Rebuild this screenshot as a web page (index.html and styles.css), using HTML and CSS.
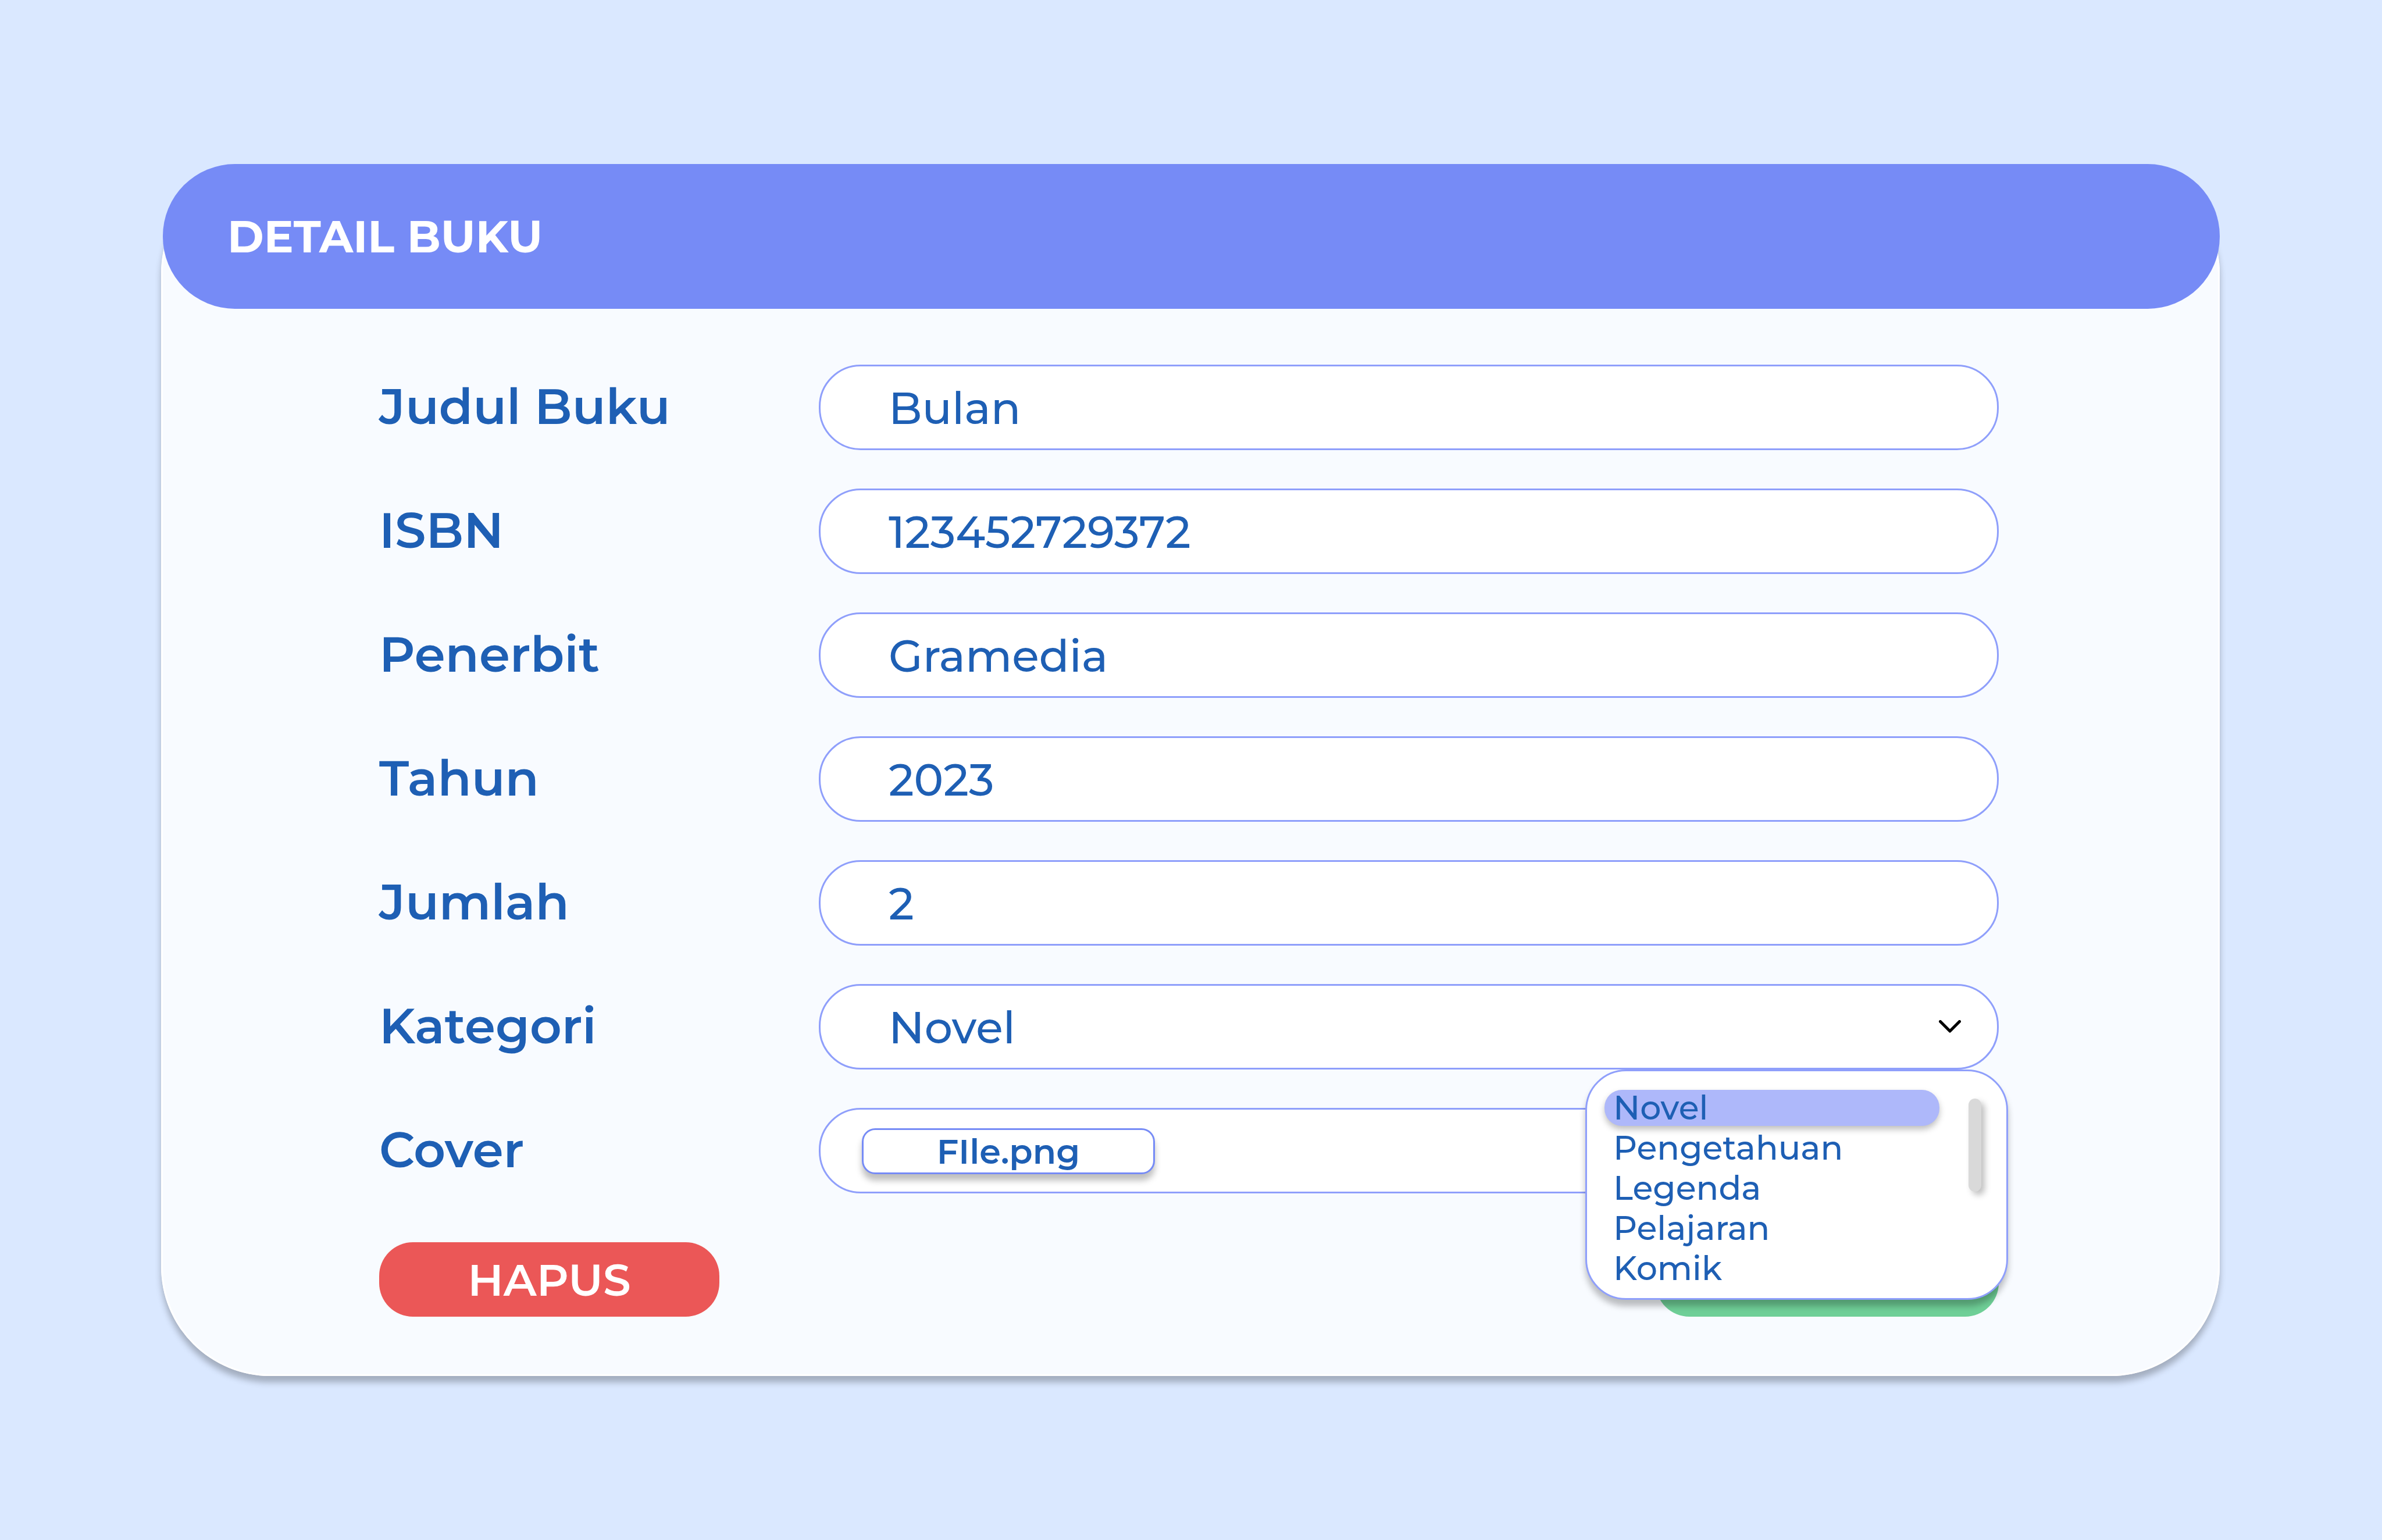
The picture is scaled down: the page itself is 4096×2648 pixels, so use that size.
FILE: index.html
```html
<!DOCTYPE html>
<html lang="id">
<head>
  <meta charset="utf-8">
  <meta name="viewport" content="width=device-width, initial-scale=1">
  <title>Detail Buku</title>
  <link rel="stylesheet" href="styles.css">
</head>
<body>
  <main class="card">
    <header class="card-header">
      <h1 class="card-title">DETAIL BUKU</h1>
    </header>
    <form class="form">
      <div class="row">
        <label class="label" for="judul">Judul Buku</label>
        <input class="field" id="judul" type="text" value="Bulan">
      </div>
      <div class="row">
        <label class="label" for="isbn">ISBN</label>
        <input class="field" id="isbn" type="text" value="123452729372">
      </div>
      <div class="row">
        <label class="label" for="penerbit">Penerbit</label>
        <input class="field" id="penerbit" type="text" value="Gramedia">
      </div>
      <div class="row">
        <label class="label" for="tahun">Tahun</label>
        <input class="field" id="tahun" type="text" value="2023">
      </div>
      <div class="row">
        <label class="label" for="jumlah">Jumlah</label>
        <input class="field" id="jumlah" type="text" value="2">
      </div>
      <div class="row">
        <label class="label" for="kategori">Kategori</label>
        <div class="select">
          <select class="field" id="kategori">
            <option selected>Novel</option>
            <option>Pengetahuan</option>
            <option>Legenda</option>
            <option>Pelajaran</option>
            <option>Komik</option>
          </select>
          <svg class="chevron" viewBox="0 0 38 22" aria-hidden="true"><path d="M2.500 2.500 19 19 35.500 2.500"/></svg>
          <div class="menu">
            <ul class="options" role="listbox" aria-label="Kategori">
              <li class="option option-active" role="option" aria-selected="true">Novel</li>
              <li class="option" role="option">Pengetahuan</li>
              <li class="option" role="option">Legenda</li>
              <li class="option" role="option">Pelajaran</li>
              <li class="option" role="option">Komik</li>
            </ul>
            <div class="scroll-thumb"></div>
          </div>
        </div>
      </div>
      <div class="row">
        <label class="label" for="cover">Cover</label>
        <div class="field file-field">
          <button class="file-button" id="cover" type="button">FIle.png</button>
        </div>
      </div>
      <div class="actions">
        <button class="button button-delete" type="button">HAPUS</button>
        <button class="button button-save" type="submit" aria-label="Simpan"></button>
      </div>
    </form>
  </main>
</body>
</html>
```
FILE: styles.css
```css
:root {
  --page: #dae8ff;
  --card: #f8fbff;
  --primary: #768bf6;
  --outline: #8f9ffb;
  --ink: #1e5fb4;
  --shadow: 0 11px 11px rgba(0, 0, 0, 0.25);
}

* {
  box-sizing: border-box;
}

body {
  margin: 0;
  padding: 282px 279px 282px 277px;
  background: var(--page);
  color: var(--ink);
  font-family: Montserrat, Inter, "Open Sans", sans-serif;
}

button,
input,
select {
  margin: 0;
  color: inherit;
  font: inherit;
}

.card {
  border-radius: 188px;
  background: var(--card);
  box-shadow: inset 0 0 0 3px #fff, var(--shadow);
}

.card-header {
  display: flex;
  align-items: center;
  height: 249px;
  margin-left: 3px;
  padding: 0 111px;
  border-radius: 124px;
  background: var(--primary);
}

.card-title {
  margin: 0;
  color: #fff;
  font-size: 76px;
  font-weight: 700;
}

.form {
  display: flex;
  flex-direction: column;
  gap: 66px;
  padding: 96px 380px 102px 375px;
}

.row {
  display: grid;
  grid-template-columns: 756px 1fr;
  align-items: center;
}

.label {
  padding-bottom: 4px;
  font-size: 85px;
  font-weight: 600;
  line-height: 104px;
}

.field {
  display: block;
  width: 100%;
  height: 147px;
  padding: 2px 120px 0 117px;
  border: 3px solid var(--outline);
  border-radius: 72px;
  background: #fff;
  font-size: 76px;
  font-weight: 500;
}

.select {
  position: relative;
}

.select .field {
  appearance: none;
}

.chevron {
  position: absolute;
  top: 62px;
  right: 65px;
  width: 38px;
  height: 22px;
  fill: none;
  stroke: #000;
  stroke-width: 5px;
  stroke-linecap: round;
  stroke-linejoin: round;
  pointer-events: none;
}

.menu {
  position: absolute;
  z-index: 1;
  top: 100%;
  right: -16px;
  display: flex;
  justify-content: space-between;
  width: 727px;
  height: 396px;
  padding: 32px 43px 0 30px;
  border: 3px solid var(--outline);
  border-radius: 70px;
  background: #fff;
  box-shadow: var(--shadow);
}

.options {
  display: flex;
  flex-direction: column;
  gap: 7px;
  width: 576px;
  margin: 0;
  padding: 0;
  list-style: none;
}

.option {
  padding: 0 15px;
  border-radius: 30px;
  font-size: 57px;
  font-weight: 500;
  line-height: 62px;
}

.option-active {
  background: #aeb8fa;
  box-shadow: 0 6px 11px rgba(0, 0, 0, 0.25);
}

.scroll-thumb {
  width: 22px;
  height: 160px;
  margin-top: 15px;
  border-radius: 11px;
  background: #d9d9d9;
  box-shadow: 6px 6px 11px rgba(0, 0, 0, 0.25);
}

.file-field {
  display: flex;
  align-items: center;
  padding: 2px 71px 0;
}

.file-button {
  width: 504px;
  height: 79px;
  padding: 0;
  border: 3px solid var(--primary);
  border-radius: 23px;
  background: #fff;
  box-shadow: var(--shadow);
  font-size: 59px;
  font-weight: 600;
  line-height: 72px;
}

.actions {
  display: flex;
  justify-content: space-between;
  margin-top: 18px;
}

.button {
  width: 585px;
  height: 128px;
  padding: 0;
  border: 0;
  border-radius: 58px;
  color: #fff;
  font-size: 76px;
  font-weight: 600;
}

.button-delete {
  background: #eb5757;
}

.button-save {
  width: 590px;
  background: #6fcf97;
}
```
